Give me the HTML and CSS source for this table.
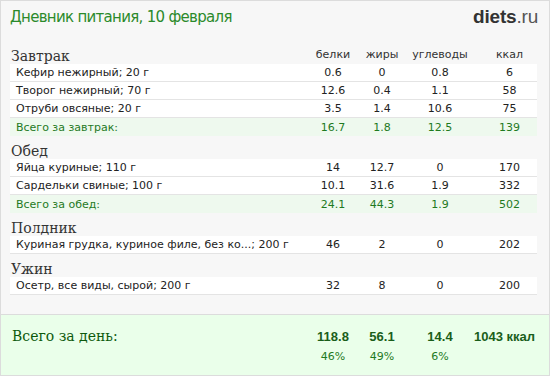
FILE: index.html
```html
<!DOCTYPE html>
<html lang="ru">
<head>
<meta charset="utf-8">
<title>Дневник питания</title>
<link rel="stylesheet" href="styles.css">
</head>
<body>
<div class="page">
  <header class="top">
    <h1 class="title">Дневник питания, 10 февраля</h1>
    <div class="logo"><b>diets</b>.ru</div>
  </header>

  <section class="meal first">
    <div class="row head"><div class="name meal-title">Завтрак</div><div class="c">белки</div><div class="c">жиры</div><div class="c">углеводы</div><div class="c k">ккал</div></div>
    <div class="row item"><div class="name">Кефир нежирный; 20 г</div><div class="c">0.6</div><div class="c">0</div><div class="c">0.8</div><div class="c k">6</div></div>
    <div class="row item"><div class="name">Творог нежирный; 70 г</div><div class="c">12.6</div><div class="c">0.4</div><div class="c">1.1</div><div class="c k">58</div></div>
    <div class="row item"><div class="name">Отруби овсяные; 20 г</div><div class="c">3.5</div><div class="c">1.4</div><div class="c">10.6</div><div class="c k">75</div></div>
    <div class="row total"><div class="name">Всего за завтрак:</div><div class="c">16.7</div><div class="c">1.8</div><div class="c">12.5</div><div class="c k">139</div></div>
  </section>

  <section class="meal">
    <div class="row head"><div class="name meal-title">Обед</div></div>
    <div class="row item"><div class="name">Яйца куриные; 110 г</div><div class="c">14</div><div class="c">12.7</div><div class="c">0</div><div class="c k">170</div></div>
    <div class="row item"><div class="name">Сардельки свиные; 100 г</div><div class="c">10.1</div><div class="c">31.6</div><div class="c">1.9</div><div class="c k">332</div></div>
    <div class="row total"><div class="name">Всего за обед:</div><div class="c">24.1</div><div class="c">44.3</div><div class="c">1.9</div><div class="c k">502</div></div>
  </section>

  <section class="meal">
    <div class="row head"><div class="name meal-title">Полдник</div></div>
    <div class="row item"><div class="name">Куриная грудка, куриное филе, без ко...; 200 г</div><div class="c">46</div><div class="c">2</div><div class="c">0</div><div class="c k">202</div></div>
  </section>

  <section class="meal">
    <div class="row head"><div class="name meal-title">Ужин</div></div>
    <div class="row item"><div class="name">Осетр, все виды, сырой; 200 г</div><div class="c">32</div><div class="c">8</div><div class="c">0</div><div class="c k">200</div></div>
  </section>

  <section class="day">
    <div class="day-row sums"><div class="day-title">Всего за день:</div><div class="c">118.8</div><div class="c">56.1</div><div class="c">14.4</div><div class="c kcal">1043 ккал</div></div>
    <div class="day-row pct"><div></div><div class="c">46%</div><div class="c">49%</div><div class="c">6%</div><div></div></div>
  </section>
</div>
</body>
</html>
```

FILE: styles.css
```css
html, body {
  margin: 0;
  padding: 0;
  background: #ffffff;
}

.page {
  width: 550px;
  height: 376px;
  box-sizing: border-box;
  border: 1px solid #dcdcdc;
  background: #f7f7f7;
  font-family: "DejaVu Sans", Verdana, sans-serif;
  font-size: 11px;
  color: #222;
  display: flex;
  flex-direction: column;
  overflow: hidden;
}

.top {
  display: flex;
  justify-content: space-between;
  align-items: center;
  padding: 4px 11px 0 9px;
  height: 24px;
}

.title {
  margin: 0;
  font-family: "DejaVu Sans", Verdana, sans-serif;
  font-weight: normal;
  font-size: 15px;
  letter-spacing: -0.7px;
  color: #2b8a2b;
}

.logo {
  font-family: "Liberation Sans", Arial, sans-serif;
  font-size: 19px;
  color: #555;
  letter-spacing: -0.2px;
}

.logo b {
  color: #333;
}

.meal {
  margin-left: 9px;
  width: 527px;
}

.row {
  display: grid;
  grid-template-columns: 298px 50px 48px 68px 63px;
  align-items: center;
}

.head {
  height: 23px;
  align-items: end;
}

.first .head {
  margin-top: 12px;
}

.head .c {
  color: #333;
  padding-bottom: 3px;
}

.meal-title {
  font-family: "DejaVu Serif", Georgia, serif;
  font-size: 14px;
  color: #333;
  line-height: 16px;
  padding-bottom: 0;
}

.item {
  background: #ffffff;
  height: 17px;
  border-bottom: 1px solid #e4e4e4;
}

.name {
  padding-left: 6px;
  white-space: nowrap;
}

.head .name {
  padding-left: 1px;
}

.c {
  text-align: center;
}

.c.k {
  padding-left: 8px;
}

.total {
  background: #eef9ee;
  height: 18px;
  color: #1f7a1f;
}

.day {
  margin-top: auto;
  border-top: 1px solid #dcdcdc;
  background: #eaffea;
  height: 61px;
  box-sizing: border-box;
  padding-top: 13px;
}

.day-row {
  display: grid;
  grid-template-columns: 307px 50px 48px 68px 63px;
  align-items: center;
}

.day-title {
  font-family: "DejaVu Serif", Georgia, serif;
  font-size: 14px;
  color: #0d5a0d;
  padding-left: 11px;
}

.sums .c {
  font-family: "Liberation Sans", Arial, sans-serif;
  font-weight: bold;
  font-size: 13px;
  color: #1a5e1a;
}

.sums .kcal {
  text-align: right;
  padding-right: 2px;
  white-space: nowrap;
}

.pct {
  margin-top: 6px;
  color: #1f7a1f;
}
```
